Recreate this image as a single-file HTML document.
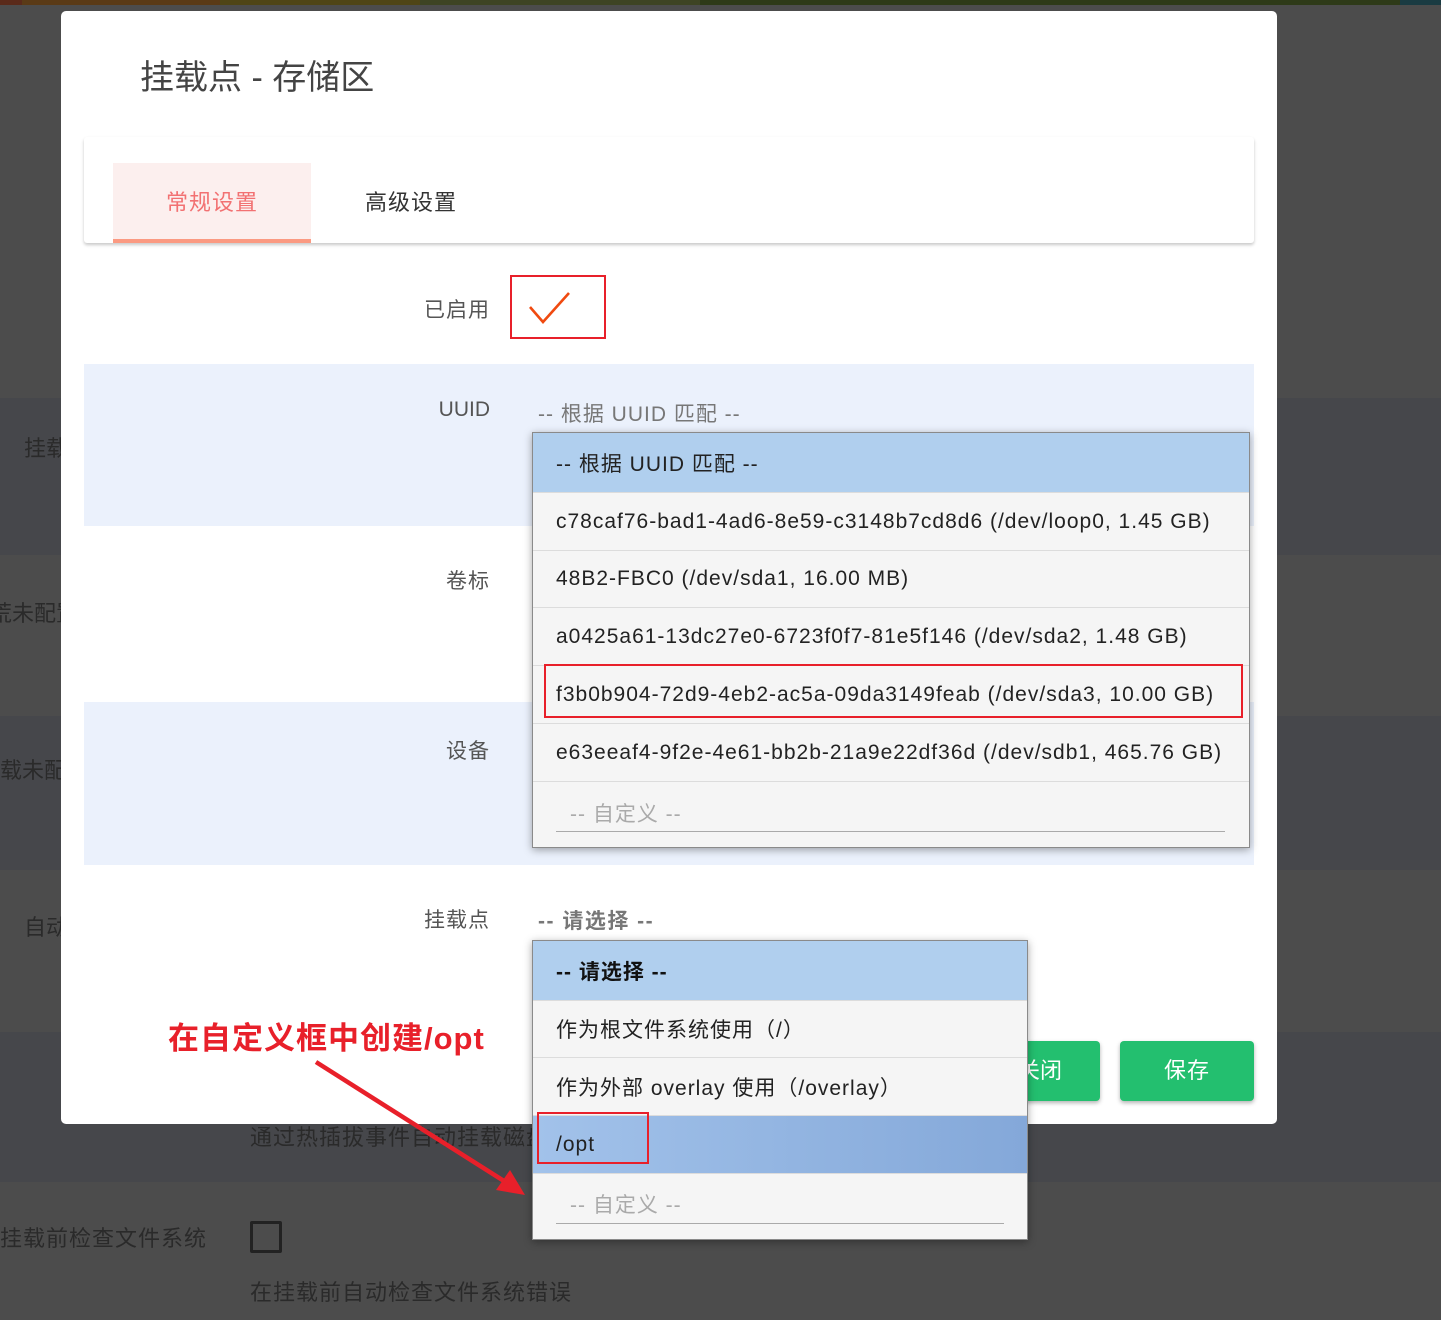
<!DOCTYPE html>
<html><head><meta charset="utf-8"><style>
*{margin:0;padding:0;box-sizing:border-box}
body{width:1441px;height:1320px;position:relative;overflow:hidden;background:#4c4c4c;font-family:"Liberation Sans","Noto Sans CJK SC",sans-serif}
.a{position:absolute}
.bd{background:#46474b}
.bg{color:#222;font-size:22px;white-space:nowrap}
.lbl{position:absolute;right:951px;font-size:21px;color:#555;white-space:nowrap}
.dd{position:absolute;background:#f5f5f5;border:1px solid #8a8a8a;box-shadow:0 2px 8px rgba(0,0,0,.35)}
.it{position:absolute;left:0;right:0;border-bottom:1px solid #dcdcdc;padding-left:23px;font-size:21px;color:#222;display:flex;align-items:center;white-space:nowrap;letter-spacing:1px}
</style></head><body>
<div class="a" style="left:0;top:0;width:1441px;height:5px;background:linear-gradient(90deg,#5a2a1a 0 22px,#5a3a16 22px 220px,#4f4516 220px 420px,#3e4424 420px 700px,#2e3a18 700px 1400px,#1a3b42 1400px)"></div>
<div class="a bd" style="left:0;top:398px;width:1441px;height:157px"></div>
<div class="a bd" style="left:0;top:716px;width:1441px;height:154px"></div>
<div class="a bd" style="left:0;top:1032px;width:1441px;height:150px"></div>
<div class="a bg" style="left:24px;top:431px;color:#2a2a2a">挂载</div>
<div class="a bg" style="left:-10px;top:596px;color:#2a2a2a">荒未配置</div>
<div class="a bg" style="left:0;top:753px;color:#2a2a2a">载未配</div>
<div class="a bg" style="left:24px;top:910px;color:#2a2a2a">自动</div>
<div class="a bg" style="left:250px;top:1120px;color:#2a2a2a;letter-spacing:1px">通过热插拔事件自动挂载磁盘</div>
<div class="a bg" style="left:0;top:1221px;color:#2a2a2a;letter-spacing:1px">挂载前检查文件系统</div>
<div class="a" style="left:250px;top:1221px;width:32px;height:32px;border:3px solid #222;border-radius:2px"></div>
<div class="a bg" style="left:250px;top:1275px;color:#2a2a2a;letter-spacing:1px">在挂载前自动检查文件系统错误</div>

<div class="a" style="left:61px;top:11px;width:1216px;height:1113px;background:#fff;border-radius:5px"></div>
<div class="a" style="left:140px;top:50px;font-size:34px;color:#444">挂载点 - 存储区</div>
<div class="a" style="left:84px;top:137px;width:1170px;height:106px;background:#fff;border-radius:3px;box-shadow:0 2px 3px rgba(0,0,0,.22)"></div>
<div class="a" style="left:113px;top:163px;width:198px;height:80px;background:#fcefee;border-bottom:4px solid #fb9a82"></div>
<div class="a" style="left:113px;top:185px;width:198px;text-align:center;font-size:22px;color:#f27172;letter-spacing:1px">常规设置</div>
<div class="a" style="left:365px;top:185px;font-size:22px;color:#333;letter-spacing:1px">高级设置</div>

<div class="lbl" style="top:294px;letter-spacing:1px">已启用</div>
<div class="a" style="left:510px;top:275px;width:96px;height:64px;border:2px solid #e8202a"></div>
<svg class="a" style="left:528px;top:291px" width="44" height="34"><path d="M2 16 L15 31 L41 2" fill="none" stroke="#f04a10" stroke-width="2.6"/></svg>

<div class="a" style="left:84px;top:364px;width:1170px;height:162px;background:#ebf1fc"></div>
<div class="a" style="left:84px;top:702px;width:1170px;height:163px;background:#ebf1fc"></div>
<div class="lbl" style="top:398px">UUID</div>
<div class="a" style="left:538px;top:398px;font-size:21px;color:#777;letter-spacing:1px">-- 根据 UUID 匹配 --</div>
<div class="lbl" style="top:565px;letter-spacing:1px">卷标</div>
<div class="lbl" style="top:735px;letter-spacing:1px">设备</div>
<div class="lbl" style="top:904px;letter-spacing:1px">挂载点</div>
<div class="a" style="left:538px;top:905px;font-size:21px;color:#777;font-weight:bold;letter-spacing:1.5px">-- 请选择 --</div>

<div class="a" style="left:168px;top:1013px;font-size:31px;font-weight:bold;color:#e8202a;letter-spacing:1px">在自定义框中创建/opt</div>
<svg class="a" style="left:300px;top:1050px" width="240" height="160"><line x1="16" y1="12" x2="215" y2="138" stroke="#e8202a" stroke-width="4.5"/><path d="M225 145 L196 140 L210 120 Z" fill="#e8202a"/></svg>

<div class="a" style="left:960px;top:1041px;width:140px;height:60px;background:#23bf6f;border-radius:4px;box-shadow:0 2px 4px rgba(0,0,0,.3);color:#fff;font-size:22px;line-height:60px;padding-left:58px">关闭</div>
<div class="a" style="left:1120px;top:1041px;width:134px;height:60px;background:#23bf6f;border-radius:4px;box-shadow:0 2px 4px rgba(0,0,0,.3);color:#fff;font-size:22px;line-height:60px;text-align:center;letter-spacing:1px">保存</div>

<div class="dd" style="left:532px;top:432px;width:718px;height:416px">
<div class="it" style="top:0;height:60px;background:#b0cfee">-- 根据 UUID 匹配 --</div>
<div class="it" style="top:60px;height:58px">c78caf76-bad1-4ad6-8e59-c3148b7cd8d6 (/dev/loop0, 1.45 GB)</div>
<div class="it" style="top:118px;height:57px">48B2-FBC0 (/dev/sda1, 16.00 MB)</div>
<div class="it" style="top:175px;height:58px">a0425a61-13dc27e0-6723f0f7-81e5f146 (/dev/sda2, 1.48 GB)</div>
<div class="it" style="top:233px;height:58px">f3b0b904-72d9-4eb2-ac5a-09da3149feab (/dev/sda3, 10.00 GB)</div>
<div class="it" style="top:291px;height:58px">e63eeaf4-9f2e-4e61-bb2b-21a9e22df36d (/dev/sdb1, 465.76 GB)</div>
<div class="a" style="left:23px;top:362px;width:669px;height:37px;border-bottom:1px solid #aaa;color:#aaa;font-size:21px;padding-left:14px;padding-top:3px;letter-spacing:1px">-- 自定义 --</div>
</div>
<div class="a" style="left:544px;top:664px;width:699px;height:54px;border:2px solid #e8202a"></div>

<div class="dd" style="left:532px;top:940px;width:496px;height:300px">
<div class="it" style="top:0;height:60px;background:#b0cfee;font-weight:bold;color:#111">-- 请选择 --</div>
<div class="it" style="top:60px;height:57px">作为根文件系统使用（/）</div>
<div class="it" style="top:117px;height:58px">作为外部 overlay 使用（/overlay）</div>
<div class="it" style="top:175px;height:58px;background:linear-gradient(90deg,#a2c2ea,#84a8d9)">/opt</div>
<div class="a" style="left:23px;top:245px;width:448px;height:38px;border-bottom:1px solid #aaa;color:#aaa;font-size:21px;padding-left:14px;padding-top:3px;letter-spacing:1px">-- 自定义 --</div>
</div>
<div class="a" style="left:537px;top:1112px;width:112px;height:52px;border:2px solid #e8202a"></div>
</body></html>
